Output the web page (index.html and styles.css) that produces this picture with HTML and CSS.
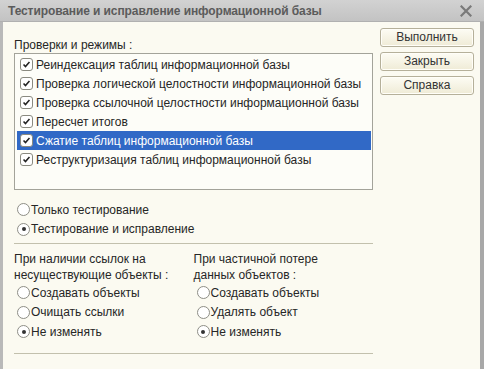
FILE: index.html
```html
<!DOCTYPE html>
<html lang="ru">
<head>
<meta charset="utf-8">
<link rel="stylesheet" href="styles.css">
</head>
<body>
<div class="window">
  <div class="titlebar">
    <span class="title">Тестирование и исправление информационной базы</span>
    <svg class="close" width="12" height="12" viewBox="0 0 12 12"><path d="M1.5 1.5 L10.5 10.5 M10.5 1.5 L1.5 10.5" stroke="#7a7a7a" stroke-width="2.2" stroke-linecap="square"/></svg>
  </div>
  <div class="content">
    <div class="main">
      <div class="label">Проверки и режимы :</div>
      <div class="list">
        <div class="row"><span class="cb"><svg viewBox="0 0 13 13"><path d="M3 6.5 L5.3 9 L10 3.6" fill="none" stroke="#222" stroke-width="1.8"/></svg></span>Реиндексация таблиц информационной базы</div>
        <div class="row"><span class="cb"><svg viewBox="0 0 13 13"><path d="M3 6.5 L5.3 9 L10 3.6" fill="none" stroke="#222" stroke-width="1.8"/></svg></span>Проверка логической целостности информационной базы</div>
        <div class="row"><span class="cb"><svg viewBox="0 0 13 13"><path d="M3 6.5 L5.3 9 L10 3.6" fill="none" stroke="#222" stroke-width="1.8"/></svg></span>Проверка ссылочной целостности информационной базы</div>
        <div class="row"><span class="cb"><svg viewBox="0 0 13 13"><path d="M3 6.5 L5.3 9 L10 3.6" fill="none" stroke="#222" stroke-width="1.8"/></svg></span>Пересчет итогов</div>
        <div class="row selected"><span class="cb"><svg viewBox="0 0 13 13"><path d="M3 6.5 L5.3 9 L10 3.6" fill="none" stroke="#222" stroke-width="1.8"/></svg></span>Сжатие таблиц информационной базы</div>
        <div class="row"><span class="cb"><svg viewBox="0 0 13 13"><path d="M3 6.5 L5.3 9 L10 3.6" fill="none" stroke="#222" stroke-width="1.8"/></svg></span>Реструктуризация таблиц информационной базы</div>
      </div>
      <div class="modes">
        <div class="radio"><span class="rb"></span>Только тестирование</div>
        <div class="radio"><span class="rb on"></span>Тестирование и исправление</div>
      </div>
      <div class="sep"></div>
      <div class="cols">
        <div class="col">
          <div class="caption">При наличии ссылок на<br>несуществующие объекты :</div>
          <div class="radio"><span class="rb"></span>Создавать объекты</div>
          <div class="radio"><span class="rb"></span>Очищать ссылки</div>
          <div class="radio"><span class="rb on"></span>Не изменять</div>
        </div>
        <div class="col">
          <div class="caption">При частичной потере<br>данных объектов :</div>
          <div class="radio"><span class="rb"></span>Создавать объекты</div>
          <div class="radio"><span class="rb"></span>Удалять объект</div>
          <div class="radio"><span class="rb on"></span>Не изменять</div>
        </div>
      </div>
      <div class="sep sep2"></div>
    </div>
    <div class="buttons">
      <div class="btn">Выполнить</div>
      <div class="btn">Закрыть</div>
      <div class="btn">Справка</div>
    </div>
  </div>
</div>
</body>
</html>
```

FILE: styles.css
```css
html, body {
  margin: 0;
  padding: 0;
}
body {
  width: 484px;
  height: 369px;
  overflow: hidden;
  font-family: "Liberation Sans", Arial, sans-serif;
  font-size: 12px;
  color: #262626;
  background: #fbfaf1;
}
.window {
  width: 484px;
  height: 369px;
  box-sizing: border-box;
  border-left: 3px solid #b9b9b9;
  border-right: 4px solid #a8a8a8;
  display: flex;
  flex-direction: column;
}
.titlebar {
  height: 22px;
  margin-left: -3px;
  margin-right: -4px;
  padding: 0 12px 0 8px;
  background: linear-gradient(#d2d2d2, #c3c3c3);
  border-bottom: 1px solid #b0b0b0;
  box-sizing: border-box;
  display: flex;
  align-items: center;
  justify-content: space-between;
}
.title {
  font-weight: bold;
  font-size: 12px;
  color: #5b5b5b;
  letter-spacing: -0.1px;
}
.close {
  display: block;
}
.content {
  flex: 1;
  display: flex;
  padding: 5px 6px 0 11px;
  gap: 7px;
}
.main {
  width: 359px;
  display: flex;
  flex-direction: column;
}
.label {
  margin-top: 10px;
  height: 16px;
  line-height: 16px;
}
.list {
  height: 137px;
  box-sizing: border-box;
  border: 1px solid #a3a39a;
  background: #fdfdf8;
  padding: 1px 1px 0 2px;
}
.row {
  height: 19px;
  display: flex;
  align-items: center;
  padding-left: 3px;
  white-space: nowrap;
}
.row.selected {
  background: #3169c6;
  color: #fff;
}
.cb {
  width: 13px;
  height: 13px;
  box-sizing: border-box;
  border: 1px solid #8a8a80;
  border-radius: 3px;
  background: #fff;
  margin-right: 3px;
  display: flex;
}
.cb svg {
  width: 11px;
  height: 11px;
}
.modes {
  margin-top: 10px;
}
.radio {
  height: 19.5px;
  display: flex;
  align-items: center;
  padding-left: 3px;
  white-space: nowrap;
}
.rb {
  width: 13px;
  height: 13px;
  box-sizing: border-box;
  border: 1px solid #8e8e86;
  border-radius: 50%;
  background: #fff;
  margin-right: 1px;
  position: relative;
}
.rb.on::after {
  content: "";
  position: absolute;
  left: 3.5px;
  top: 3.5px;
  width: 4px;
  height: 4px;
  border-radius: 50%;
  background: #333;
}
.sep {
  margin-top: 4px;
  height: 1px;
  background: #c2c0ad;
}
.cols {
  display: flex;
  margin-top: 7px;
}
.col {
  width: 181px;
}
.caption {
  line-height: 16px;
  margin-bottom: 0;
}
.sep2 {
  margin-top: 11px;
}
.buttons {
  display: flex;
  flex-direction: column;
  gap: 5px;
  width: 94px;
  padding-top: 1px;
}
.btn {
  height: 19px;
  box-sizing: border-box;
  border: 1px solid #b5b09a;
  border-radius: 3px;
  background: linear-gradient(#fdfcf4, #efebd6);
  box-shadow: inset 0 0 0 1px #fffef8;
  text-align: center;
  line-height: 17px;
  color: #333;
}
```
